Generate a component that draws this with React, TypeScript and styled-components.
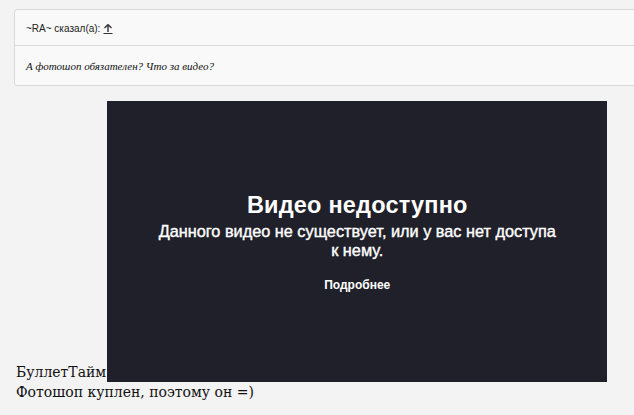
import React from "react";
import styled, { createGlobalStyle } from "styled-components";

const Global = createGlobalStyle`
  html, body {
    margin: 0;
    padding: 0;
    overflow: hidden;
    background: #f3f3f3;
  }
  body {
    width: 634px;
    height: 415px;
  }
`;

const Page = styled.div`
  padding: 9px 0 0 14px;
  width: 700px;
`;

const Quote = styled.div`
  width: 660px;
  background: #f9f9f9;
  border: 1px solid #d9d9d9;
  border-radius: 3px;
`;

const QuoteHead = styled.div`
  height: 36px;
  box-sizing: border-box;
  padding: 2px 0 0 11px;
  display: flex;
  align-items: center;
  gap: 3px;
  border-bottom: 1px solid #d9d9d9;
  font-family: "Liberation Sans", Arial, sans-serif;
  font-size: 10px;
  color: #222;
`;

const UpLink = styled.a`
  display: inline-flex;
  color: #333;
  margin-top: -1px;
`;

const QuoteBody = styled.div`
  height: 39px;
  box-sizing: border-box;
  padding: 0 0 0 11px;
  display: flex;
  align-items: center;
  font-family: "Liberation Serif", Georgia, serif;
  font-style: italic;
  font-size: 11px;
  color: #111;
`;

const Post = styled.div`
  margin: 15px 0 0 2px;
  font-family: "DejaVu Serif", Georgia, serif;
  font-size: 14px;
  line-height: 20px;
  color: #111;
`;

const Line = styled.div`
  white-space: nowrap;
`;

const Video = styled.div`
  display: inline-flex;
  flex-direction: column;
  align-items: center;
  vertical-align: bottom;
  width: 500px;
  height: 281px;
  margin-left: 1px;
  background: #1f2029;
  color: #fff;
  font-family: "Liberation Sans", Arial, Helvetica, sans-serif;
  text-align: center;
  white-space: normal;
  box-sizing: border-box;
  padding-top: 90px;
`;

const Title = styled.div`
  font-size: 23.5px;
  font-weight: 700;
  line-height: 28px;
  letter-spacing: 0.2px;
`;

const Sub = styled.div`
  font-size: 16.3px;
  line-height: 19px;
  width: 404px;
  margin-top: 3px;
  -webkit-text-stroke: 0.4px #fff;
`;

const More = styled.div`
  margin-top: 15px;
  font-size: 12px;
  font-weight: 700;
`;

export default function App() {
  return (
    <>
      <Global />
      <Page>
        <Quote>
          <QuoteHead>
            <span>~RA~ сказал(а):</span>
            <UpLink>
              <svg width="10" height="11" viewBox="0 0 10 11">
                <path d="M5 1.5 L1.5 5 M5 1.5 L8.5 5 M5 1.5 V9" stroke="#333" strokeWidth="1.4" fill="none" />
                <path d="M0.5 10.5 H9.5" stroke="#333" strokeWidth="1" />
              </svg>
            </UpLink>
          </QuoteHead>
          <QuoteBody>А фотошоп обязателен? Что за видео?</QuoteBody>
        </Quote>
        <Post>
          <Line>
            БуллетТайм
            <Video>
              <Title>Видео недоступно</Title>
              <Sub>Данного видео не существует, или у вас нет доступа к нему.</Sub>
              <More>Подробнее</More>
            </Video>
          </Line>
          <Line>Фотошоп куплен, поэтому он =)</Line>
        </Post>
      </Page>
    </>
  );
}
